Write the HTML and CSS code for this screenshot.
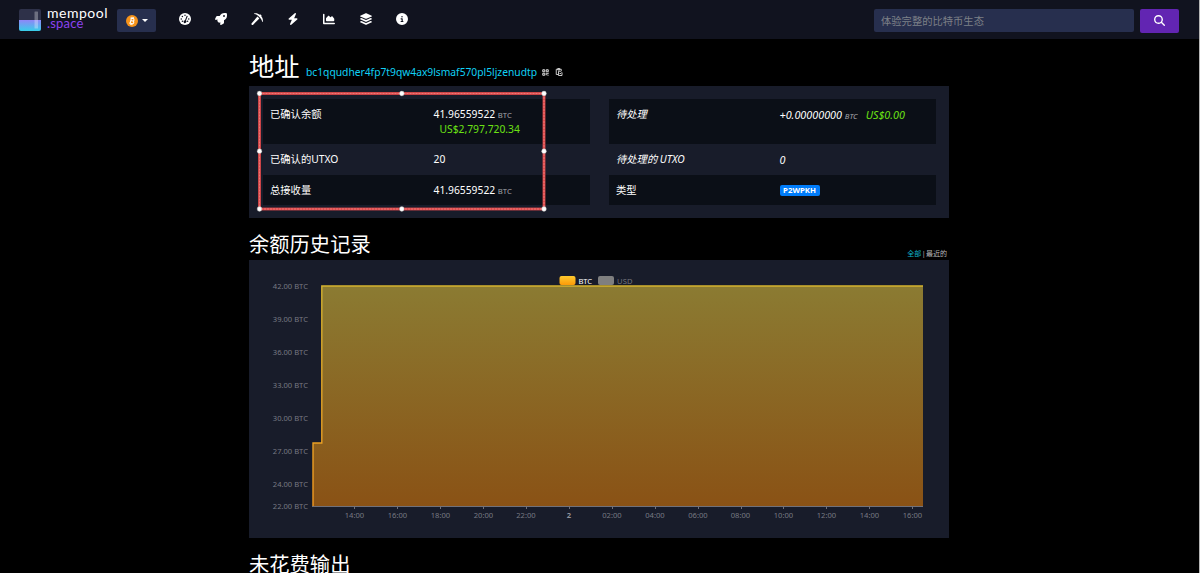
FILE: index.html
```html
<!DOCTYPE html>
<html lang="zh">
    <head>
        <meta charset="utf-8"/>
        <title>mempool.space</title>
        <link rel="stylesheet" href="styles.css">
    </head>
    <body>
        <header class="navbar">
            <a class="logo">
                <svg class="logo-mark" viewBox="0 0 22 22">
                    <defs>
                        <linearGradient id="tank" x1="0" y1="0" x2="0" y2="1">
                            <stop offset="0" stop-color="#9086f8"/>
                            <stop offset="1" stop-color="#37cfe9"/>
                        </linearGradient>
                    </defs>
                    <rect width="22" height="22" rx="2" fill="#2e3149"/>
                    <path d="M0 11h22v9a2 2 0 0 1-2 2H2a2 2 0 0 1-2-2z" fill="url(#tank)"/>
                    <rect x="15.5" y="2.5" width="3.5" height="17" rx=".5" fill="#fff" opacity=".3"/>
                </svg>
                <span class="logo-text"><span class="logo-top">mempool</span><span class="logo-bottom">.space</span></span>
            </a>
            <button class="network">
                <svg class="coin" viewBox="0 0 24 24">
                    <circle cx="12" cy="12" r="12" fill="#f7931a"/>
                    <g transform="rotate(13 12 12)" fill="none" stroke="#fff" stroke-width="2.1">
                        <path d="M7.5 6.8h5.4a2.5 2.5 0 0 1 0 5H9.3h4.2a2.7 2.7 0 0 1 0 5.4h-6M9.5 6.8v10.4M10.6 4v3M13.3 4v3M10.6 17v3M13.3 17v3"/>
                    </g>
                </svg>
                <span class="caret"></span>
            </button>
            <nav class="menu">
                <svg viewBox="0 0 512 512"><circle cx="256" cy="256" r="256"/><g fill="#11131f"><circle cx="144" cy="352" r="32"/><circle cx="96" cy="256" r="32"/><circle cx="144" cy="144" r="32"/><circle cx="256" cy="96" r="32"/><circle cx="416" cy="256" r="32"/><circle cx="368" cy="352" r="32"/><path d="M330 112l44 18-74 192a62 62 0 1 1-44-18z"/></g></svg>
                <svg viewBox="0 0 512 512"><path d="M505.12 19.09c-1.19-5.53-6.66-11-12.21-12.19C460.72 0 435.51 0 410.41 0 307.18 0 245.27 55.2 199.05 128H94.84c-16.35.02-35.56 11.88-42.89 26.48L2.52 253.3A28.4 28.4 0 0 0 0 264a24 24 0 0 0 24 24h103.82l-22.48 22.47c-11.36 11.36-13 32.26 0 45.25l50.91 50.9c11.15 11.19 32.15 13.16 45.27 0L224 384.16V488a24 24 0 0 0 24 24 28.56 28.56 0 0 0 10.71-2.52l98.73-49.39c14.63-7.3 26.5-26.5 26.5-42.86V312.8C456.54 266.48 512 204.4 512 101.7c.08-25.2.08-50.4-6.88-82.61zM384 168a40 40 0 1 1 40-40 40 40 0 0 1-40 40z"/></svg>
                <svg viewBox="0 0 512 512"><path d="M274 154l84 84L92 496c-18 18-45 18-62 1s-17-44 1-62zM146 40c-16-1-17-24-1-27C225-5 310 18 376 76l19-19 62 62-19 19c58 66 80 150 64 230-3 15-25 15-28-1-12-69-46-132-97-180L324 134C278 86 215 52 146 40z"/></svg>
                <svg viewBox="0 0 448 512"><path d="M349.4 44.6c5.9-13.7 1.5-29.7-10.6-38.5s-28.6-8-39.9 1.8l-256 224c-10 8.8-13.6 22.9-8.9 35.3S50.7 288 64 288h111.5L98.6 467.4c-5.9 13.7-1.5 29.7 10.6 38.5s28.6 8 39.9-1.8l256-224c10-8.8 13.6-22.9 8.9-35.3s-16.6-20.7-30-20.7H272.5z"/></svg>
                <svg viewBox="0 0 512 512"><path d="M64 64c0-17.700-14.300-32-32-32S0 46.300 0 64v368c0 26 22 48 48 48h432c17.700 0 32-14.300 32-32s-14.300-32-32-32H80c-8.800 0-16-7.200-16-16zm96 288h288c17.700 0 32-14.300 32-32v-68.200c0-7.600-2.700-15-7.700-20.800l-65.800-76.800c-12.100-14.200-33.700-15-46.900-1.800l-21 21c-10 10-26.400 9.200-35.400-1.600l-39.200-47c-12.600-15.100-35.700-15.400-48.700-.6L135.900 215c-5.100 5.800-7.900 13.300-7.900 21.100v84c0 17.700 14.300 32 32 32z"/></svg>
                <svg viewBox="0 0 512 512"><path d="M12 112L240 12q16-6 32 0l228 100q24 16 0 32L272 244q-16 6-32 0L12 144q-24-16 0-32zM12 238l50-22 162 72q32 12 64 0l162-72 50 22q24 16 0 32L272 372q-16 6-32 0L12 270q-24-16 0-32zM12 366l50-22 162 72q32 12 64 0l162-72 50 22q24 16 0 32L272 500q-16 6-32 0L12 398q-24-16 0-32z"/></svg>
                <svg viewBox="0 0 512 512"><path d="M256 512A256 256 0 1 0 256 0a256 256 0 1 0 0 512zM216 336h24v-64h-24c-13.300 0-24-10.700-24-24s10.700-24 24-24h48c13.300 0 24 10.700 24 24v88h8c13.300 0 24 10.700 24 24s-10.700 24-24 24h-80c-13.300 0-24-10.700-24-24s10.700-24 24-24zm40-208a32 32 0 1 1 0 64 32 32 0 1 1 0-64z"/></svg>
            </nav>
            <form class="search">
                <input type="text" class="search-input" placeholder="体验完整的比特币生态">
                <button type="button" class="search-btn">
                    <svg viewBox="0 0 512 512"><path d="M416 208c0 45.900-14.900 88.300-40 122.700l126.600 126.700c12.500 12.500 12.500 32.800 0 45.300s-32.800 12.500-45.300 0L330.700 376c-34.400 25.200-76.800 40-122.700 40C93.100 416 0 322.900 0 208S93.100 0 208 0s208 93.100 208 208zM208 352a144 144 0 1 0 0-288 144 144 0 1 0 0 288z"/></svg>
                </button>
            </form>
        </header>

        <main class="container">
            <div class="title">
                <h1>地址</h1>
                <a class="address">bc1qqudher4fp7t9qw4ax9lsmaf570pl5ljzenudtp</a>
                <svg class="qr" viewBox="0 0 14 14" fill="none" stroke="#ddd" stroke-width="2"><path d="M1.500 1.500h4v4h-4zM8.500 1.500h4v4h-4zM1.500 8.500h4v4h-4zM8.500 7.500v5M12.500 7.500v2M10 9.500h2M11 12.500h2"/></svg>
                <svg class="clip" viewBox="0 0 14 16" fill="none" stroke="#ddd" stroke-width="1.800"><path d="M5 13H1.500V2.500h10V6M4.500 1h4v3h-4zM6 6.500h4l3 3V15H6zM8 11h3"/></svg>
            </div>

            <section class="box summary">
                <div class="table">
                    <div class="row tall">
                        <span class="label">已确认余额</span>
                        <span class="value">41.96559522 <small>BTC</small><span class="fiat below">US$2,797,720.34</span></span>
                    </div>
                    <div class="row">
                        <span class="label">已确认的UTXO</span>
                        <span class="value">20</span>
                    </div>
                    <div class="row">
                        <span class="label">总接收量</span>
                        <span class="value">41.96559522 <small>BTC</small></span>
                    </div>
                </div>
                <div class="table">
                    <div class="row tall pending">
                        <span class="label">待处理</span>
                        <span class="value">+0.00000000 <small>BTC</small><span class="fiat">US$0.00</span></span>
                    </div>
                    <div class="row pending">
                        <span class="label">待处理的 UTXO</span>
                        <span class="value">0</span>
                    </div>
                    <div class="row">
                        <span class="label">类型</span>
                        <span class="value"><span class="badge">P2WPKH</span></span>
                    </div>
                </div>
                <svg class="marker" viewBox="0 0 292 124">
                    <rect x="3.500" y="3.500" width="284.500" height="115.500" fill="none" stroke="#df4a4b" stroke-width="2.800"/>
                    <rect x="3.500" y="3.500" width="284.500" height="115.500" fill="none" stroke="#ec8584" stroke-width=".8" stroke-dasharray="2 1"/>
                    <g fill="#fff" stroke="#999" stroke-width=".4">
                        <circle cx="3.500" cy="3.500" r="2.400"/><circle cx="145.800" cy="3.500" r="2.400"/><circle cx="288" cy="3.500" r="2.400"/>
                        <circle cx="3.500" cy="61.200" r="2.400"/><circle cx="288" cy="61.200" r="2.400"/>
                        <circle cx="3.500" cy="119" r="2.400"/><circle cx="145.800" cy="119" r="2.400"/><circle cx="288" cy="119" r="2.400"/>
                    </g>
                </svg>
            </section>

            <div class="subtitle">
                <h2>余额历史记录</h2>
                <span class="range"><a class="active">全部</a> | <a>最近的</a></span>
            </div>

            <section class="box history">
                <svg class="chart" viewBox="0 0 700 278">
                    <defs>
                        <linearGradient id="area" x1="0" y1="0" x2="0" y2="1">
                            <stop offset="0" stop-color="#8b7b32"/>
                            <stop offset="1" stop-color="#8a5215"/>
                        </linearGradient>
                        <linearGradient id="line" gradientUnits="userSpaceOnUse" x1="0" y1="26" x2="0" y2="246">
                            <stop offset="0" stop-color="#d5b32e"/>
                            <stop offset="1" stop-color="#f2981e"/>
                        </linearGradient>
                        <linearGradient id="swatch" x1="0" y1="0" x2="0" y2="1">
                            <stop offset="0" stop-color="#fdc92e"/>
                            <stop offset="1" stop-color="#fb9a08"/>
                        </linearGradient>
                    </defs>
                    <path d="M64 246V183h9V26h601v220z" fill="url(#area)"/>
                    <path d="M64 246V183h8.800V26H674" fill="none" stroke="url(#line)" stroke-width="1.400"/>
                    <path d="M63 246.500h611" stroke="#71717a" stroke-width="1"/>
                    <path d="M105.500 247v2M148.500 247v2M191.500 247v2M234.500 247v2M277.500 247v2M320.500 247v2M363.500 247v2M406.500 247v2M449.500 247v2M492.500 247v2M534.500 247v2M577.500 247v2M620.500 247v2M663.500 247v2" stroke="#71717a"/>
                    <rect x="310.500" y="16" width="16" height="9" rx="2" fill="url(#swatch)"/>
                    <text class="legend" x="329.500" y="23.500" textLength="13.500">BTC</text>
                    <rect x="349" y="16" width="16" height="9" rx="2" fill="#7f7f7f"/>
                    <text class="legend off" x="368" y="23.500" textLength="15.500">USD</text>
                    <g class="y-axis">
                        <text x="59" y="28.500">42.00 BTC</text>
                        <text x="59" y="62">39.00 BTC</text>
                        <text x="59" y="95">36.00 BTC</text>
                        <text x="59" y="128">33.00 BTC</text>
                        <text x="59" y="161">30.00 BTC</text>
                        <text x="59" y="194">27.00 BTC</text>
                        <text x="59" y="227">24.00 BTC</text>
                        <text x="59" y="249">22.00 BTC</text>
                    </g>
                    <g class="x-axis">
                        <text x="105.500" y="258">14:00</text>
                        <text x="148.500" y="258">16:00</text>
                        <text x="191.500" y="258">18:00</text>
                        <text x="234.500" y="258">20:00</text>
                        <text x="277" y="258">22:00</text>
                        <text x="320" y="258" class="day">2</text>
                        <text x="363" y="258">02:00</text>
                        <text x="406" y="258">04:00</text>
                        <text x="449" y="258">06:00</text>
                        <text x="491.500" y="258">08:00</text>
                        <text x="534.500" y="258">10:00</text>
                        <text x="577.500" y="258">12:00</text>
                        <text x="620.500" y="258">14:00</text>
                        <text x="663.500" y="258">16:00</text>
                    </g>
                </svg>
            </section>

            <div class="subtitle last">
                <h2>未花费输出</h2>
            </div>
        </main>
    </body>
</html>
```

FILE: styles.css
```css
*{
    box-sizing: border-box;
}
html{
    height: 100%;
    overflow: hidden;
}
body{
    margin: 0;
    height: 573px;
    overflow: hidden;
    background: #000;
    border-right: 1px solid #b5b5b5;
    color: #fff;
    font-family: "Noto Sans", "Noto Sans CJK SC", sans-serif;
    font-size: 10.3px;
    line-height: 15px;
}
h1, h2{
    margin: 0;
    font-weight: 400;
}
svg{
    display: block;
}
button{
    border: 0;
    padding: 0;
}
.navbar{
    display: flex;
    align-items: center;
    height: 39px;
    padding: 0 20px 0 19px;
    background: #11131f;
}
.logo{
    display: flex;
    width: 98px;
}
.logo-mark{
    width: 22px;
    height: 22px;
    margin-right: 6px;
}
.logo-text{
    display: flex;
    flex-direction: column;
    margin-top: -1px;
    font-family: Lato, sans-serif;
    font-size: 14px;
    line-height: 10.5px;
}
.logo-top{
    letter-spacing: .5px;
}
.logo-bottom{
    color: #8b42f0;
    font-size: 13px;
    letter-spacing: .2px;
}
.network{
    display: flex;
    align-items: center;
    justify-content: center;
    gap: 4px;
    width: 39px;
    height: 23px;
    margin-top: 2px;
    border-radius: 2px;
    background: #272f4e;
}
.coin{
    width: 12px;
    height: 12px;
}
.caret{
    border: 3px solid transparent;
    border-top-color: #fff;
    border-bottom: 0;
}
.menu{
    display: flex;
    gap: 24.2px;
    margin-left: 22.6px;
    margin-top: -2px;
    fill: #fff;
}
.menu svg{
    width: 12px;
    height: 12px;
}
.search{
    display: flex;
    gap: 6px;
    margin: 2px 0 0 auto;
}
.search-input{
    width: 260px;
    height: 23px;
    padding: 2px 7px 0;
    border: 0;
    border-radius: 2px;
    background: #272f4e;
    font: inherit;
}
.search-input::placeholder{
    color: #7d8087;
}
.search-btn{
    display: flex;
    align-items: center;
    justify-content: center;
    width: 39px;
    height: 24px;
    border-radius: 2px;
    background: #6225b2;
}
.search-btn svg{
    width: 11px;
    height: 11px;
    fill: #fff;
}
.container{
    width: 700px;
    margin-left: 249px;
}
.title{
    display: flex;
    align-items: baseline;
    height: 47px;
    padding-top: 9px;
}
.title h1{
    width: 57px;
    font-size: 25.3px;
    line-height: 36px;
}
.address{
    width: 236px;
    color: #10d1f5;
    font-size: 10.3px;
    letter-spacing: -.02px;
    white-space: nowrap;
}
.qr{
    width: 7px;
    height: 7px;
    margin-right: 6px;
}
.clip{
    width: 8px;
    height: 8px;
}
.box{
    background: #181c2a;
}
.summary{
    position: relative;
    display: flex;
    gap: 19px;
    height: 132px;
    padding: 13px 13px 13px 14px;
}
.table{
    width: 327px;
}
.row{
    display: flex;
    height: 30.5px;
    padding: 8px 7px;
}
.row:nth-child(odd){
    background: #0b0f17;
}
.row.tall{
    height: 45px;
}
.label{
    width: 163.5px;
}
.pending{
    font-style: italic;
}
.pending .value{
    font-size: 10.8px;
}
.value small{
    color: #a4a5aa;
    font-size: 7.7px;
}
.fiat{
    margin-left: 8px;
    color: #6be314;
}
.fiat.below{
    display: block;
    margin: -1px 0 0 6px;
}
.badge{
    display: block;
    width: 40px;
    height: 11px;
    margin-top: 2px;
    border-radius: 2px;
    background: #007cfa;
    font-size: 7.8px;
    font-weight: 700;
    line-height: 11px;
    text-align: center;
}
.marker{
    position: absolute;
    left: 7px;
    top: 4px;
    width: 292px;
    height: 124px;
}
.subtitle{
    display: flex;
    justify-content: space-between;
    height: 42px;
    padding: 11px 2px 0 0;
}
.subtitle h2{
    font-size: 20.3px;
    line-height: 30px;
}
.range{
    padding-top: 17px;
    font-size: 7px;
    color: #bbb;
    word-spacing: -1.4px;
}
.range .active{
    color: #10b4c8;
}
.history{
    height: 278px;
}
.chart{
    width: 700px;
    height: 278px;
    font-size: 7.6px;
}
.legend{
    fill: #fff;
}
.legend.off{
    fill: #75767d;
}
.y-axis{
    fill: #777982;
    text-anchor: end;
}
.x-axis{
    fill: #777982;
    text-anchor: middle;
}
.day{
    font-weight: 700;
    fill: #90929a;
}
```
